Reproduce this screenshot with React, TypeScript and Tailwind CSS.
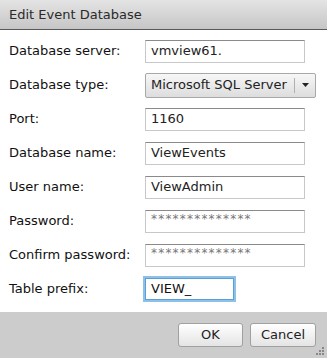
const rows: { label: string; value: string; kind?: "select" | "focus" | "password" }[] = [
  { label: "Database server:", value: "vmview61." },
  { label: "Database type:", value: "Microsoft SQL Server", kind: "select" },
  { label: "Port:", value: "1160" },
  { label: "Database name:", value: "ViewEvents" },
  { label: "User name:", value: "ViewAdmin" },
  { label: "Password:", value: "**************", kind: "password" },
  { label: "Confirm password:", value: "**************", kind: "password" },
  { label: "Table prefix:", value: "VIEW_", kind: "focus" },
];

const Field = ({ value, kind }: { value: string; kind?: string }) => {
  if (kind === "select") {
    return (
      <div className="flex h-[25px] w-[171px] items-center rounded-[2px] border border-[#a8a8a8] bg-gradient-to-b from-[#f7f7f7] to-[#dddddd] text-[#222]">
        <span className="flex-1 pl-[5px]">{value}</span>
        <span className="h-[15px] w-px bg-[#b0b0b0]" />
        <span className="flex w-[20px] justify-center">
          <svg width="7" height="4" viewBox="0 0 7 4">
            <path d="M0 0h7L3.5 4z" fill="#222" />
          </svg>
        </span>
      </div>
    );
  }
  if (kind === "focus") {
    return (
      <div className="-ml-[2px] flex h-[26px] w-[93px] items-center border-2 border-[#8cc1ea] bg-white pl-[6px] text-[#111] shadow-[inset_0_0_0_1px_#5d9ed6]">
        {value}
      </div>
    );
  }
  return (
    <div className="flex h-[23px] w-[160px] items-center border border-[#c8c8c8] border-t-[#8a8a8a] bg-white pl-[5px] text-[#222]">
      <span className={kind === "password" ? "-mt-[5px] text-[12px] tracking-[1.2px] text-[#777]" : ""}>
        {value}
      </span>
    </div>
  );
};

export default function App() {
  return (
    <div
      className="flex h-[358px] w-[327px] flex-col bg-white text-[13px] text-[#111]"
      style={{ fontFamily: '"DejaVu Sans", Verdana, sans-serif' }}
    >
      <div className="flex h-[30px] items-center border-b border-[#5a5a5a] bg-gradient-to-b from-[#e4e4e4] to-[#c6c6c6] pl-[9px] text-[13px] text-[#2a2a2a]">
        Edit Event Database
      </div>
      <div className="flex flex-1 flex-col pt-[4px]">
        {rows.map((r) => (
          <div key={r.label} className="flex h-[34px] items-center">
            <div className="w-[145px] pl-[9px]">{r.label}</div>
            <Field value={r.value} kind={r.kind} />
          </div>
        ))}
      </div>
      <div className="relative flex h-[46px] items-center justify-end gap-[7px] bg-[#cccccc] pr-[11px]">
        <button className="h-[24px] w-[65px] rounded-[3px] border border-[#a0a0a0] bg-gradient-to-b from-[#ffffff] to-[#e4e4e4] text-[13px] text-[#222]">
          OK
        </button>
        <button className="h-[24px] w-[66px] rounded-[3px] border border-[#a0a0a0] bg-gradient-to-b from-[#ffffff] to-[#e4e4e4] text-[13px] text-[#222]">
          Cancel
        </button>
        <svg className="absolute bottom-[2px] right-[2px]" width="9" height="9" viewBox="0 0 9 9">
          <rect x="6" y="0" width="2" height="2" fill="#888" />
          <rect x="3" y="3" width="2" height="2" fill="#888" />
          <rect x="6" y="3" width="2" height="2" fill="#888" />
          <rect x="0" y="6" width="2" height="2" fill="#888" />
          <rect x="3" y="6" width="2" height="2" fill="#888" />
          <rect x="6" y="6" width="2" height="2" fill="#888" />
        </svg>
      </div>
    </div>
  );
}
